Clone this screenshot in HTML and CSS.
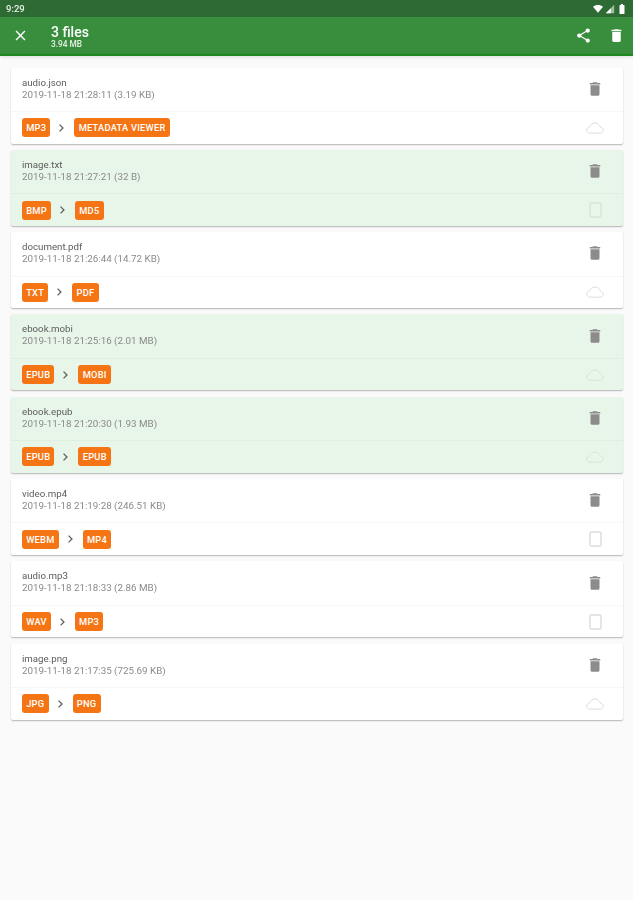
FILE: index.html
```html
<!DOCTYPE html>
<html lang="en">
<head>
<meta charset="utf-8">
<title>Files</title>
<link rel="stylesheet" href="styles.css">
</head>
<body>
<svg class="defs" width="0" height="0" aria-hidden="true">
  <symbol id="i-trash" viewBox="0 0 24 24"><path d="M6 19c0 1.100.9 2 2 2h8c1.100 0 2-.9 2-2V7H6v12zM19 4h-3.500l-1-1h-5l-1 1H5v2h14V4z"/></symbol>
  <symbol id="i-cloud" viewBox="0 0 18 12"><path d="M4.200 11.200C2.200 11.200.7 9.800.7 8c0-1.700 1.300-3 3-3.200C4.600 2.500 6.600 1 9 1c2.700 0 4.800 1.800 5.200 4.100 1.800.2 3.100 1.500 3.100 3 0 1.800-1.500 3.100-3.300 3.100z"/></symbol>
  <symbol id="i-tablet" viewBox="0 0 13 16"><rect x="1" y="1" width="11" height="14" rx="1.500"/></symbol>
  <symbol id="i-chevron" viewBox="0 0 24 24"><path d="M8.600 5.400 7 7l5 5-5 5 1.600 1.600L15.200 12z"/></symbol>
</svg>

<header class="appbar">
  <div class="status">
    <span class="clock">9:29</span>
    <div class="status-icons">
      <svg class="st-wifi" viewBox="0 0 24 24"><path d="M12 21 0 6.500C3.200 3.900 7.400 2.500 12 2.500s8.800 1.400 12 4z"/></svg>
      <svg class="st-signal" viewBox="0 0 24 24"><path d="M2 22 22 2v20z" opacity=".55"/><path d="M2 22 14 10v12z"/></svg>
      <svg class="st-batt" viewBox="0 0 24 24"><path d="M16 4h-2V2h-4v2H8c-.6 0-1 .4-1 1v16c0 .6.400 1 1 1h8c.6 0 1-.4 1-1V5c0-.6-.4-1-1-1z"/></svg>
    </div>
  </div>
  <div class="toolbar">
    <svg class="tb-close" viewBox="0 0 24 24"><path d="M19 6.410 17.590 5 12 10.590 6.410 5 5 6.410 10.590 12 5 17.590 6.410 19 12 13.410 17.590 19 19 17.590 13.410 12z"/></svg>
    <div class="tb-title">
      <div class="tb-main">3 files</div>
      <div class="tb-sub">3.94 MB</div>
    </div>
    <div class="tb-actions">
      <svg class="tb-icon" viewBox="0 0 24 24"><path d="M18 16.080c-.76 0-1.440.3-1.960.77L8.910 12.700c.05-.23.090-.46.090-.7s-.04-.47-.09-.7l7.050-4.110c.54.5 1.250.81 2.040.81 1.660 0 3-1.340 3-3s-1.340-3-3-3-3 1.340-3 3c0 .24.040.47.090.7L8.040 9.810C7.500 9.310 6.790 9 6 9c-1.660 0-3 1.340-3 3s1.340 3 3 3c.79 0 1.500-.31 2.040-.81l7.120 4.160c-.05.21-.08.43-.08.65 0 1.610 1.310 2.920 2.920 2.920s2.920-1.310 2.920-2.920-1.310-2.920-2.920-2.920z"/></svg>
      <svg class="tb-icon"><use href="#i-trash"/></svg>
    </div>
  </div>
</header>

<main class="list">
  <article class="card">
    <div class="card-top"><div class="meta"><div class="name">audio.json</div><div class="date">2019-11-18 21:28:11 (3.19 KB)</div></div><svg class="trash"><use href="#i-trash"/></svg></div>
    <div class="card-bottom"><span class="chip">MP3</span><svg class="chev"><use href="#i-chevron"/></svg><span class="chip">METADATA VIEWER</span><svg class="dest cloud"><use href="#i-cloud"/></svg></div>
  </article>
  <article class="card sel">
    <div class="card-top"><div class="meta"><div class="name">image.txt</div><div class="date">2019-11-18 21:27:21 (32 B)</div></div><svg class="trash"><use href="#i-trash"/></svg></div>
    <div class="card-bottom"><span class="chip">BMP</span><svg class="chev"><use href="#i-chevron"/></svg><span class="chip">MD5</span><svg class="dest tablet"><use href="#i-tablet"/></svg></div>
  </article>
  <article class="card">
    <div class="card-top"><div class="meta"><div class="name">document.pdf</div><div class="date">2019-11-18 21:26:44 (14.72 KB)</div></div><svg class="trash"><use href="#i-trash"/></svg></div>
    <div class="card-bottom"><span class="chip">TXT</span><svg class="chev"><use href="#i-chevron"/></svg><span class="chip">PDF</span><svg class="dest cloud"><use href="#i-cloud"/></svg></div>
  </article>
  <article class="card sel">
    <div class="card-top"><div class="meta"><div class="name">ebook.mobi</div><div class="date">2019-11-18 21:25:16 (2.01 MB)</div></div><svg class="trash"><use href="#i-trash"/></svg></div>
    <div class="card-bottom"><span class="chip">EPUB</span><svg class="chev"><use href="#i-chevron"/></svg><span class="chip">MOBI</span><svg class="dest cloud"><use href="#i-cloud"/></svg></div>
  </article>
  <article class="card sel">
    <div class="card-top"><div class="meta"><div class="name">ebook.epub</div><div class="date">2019-11-18 21:20:30 (1.93 MB)</div></div><svg class="trash"><use href="#i-trash"/></svg></div>
    <div class="card-bottom"><span class="chip">EPUB</span><svg class="chev"><use href="#i-chevron"/></svg><span class="chip">EPUB</span><svg class="dest cloud"><use href="#i-cloud"/></svg></div>
  </article>
  <article class="card">
    <div class="card-top"><div class="meta"><div class="name">video.mp4</div><div class="date">2019-11-18 21:19:28 (246.51 KB)</div></div><svg class="trash"><use href="#i-trash"/></svg></div>
    <div class="card-bottom"><span class="chip">WEBM</span><svg class="chev"><use href="#i-chevron"/></svg><span class="chip">MP4</span><svg class="dest tablet"><use href="#i-tablet"/></svg></div>
  </article>
  <article class="card">
    <div class="card-top"><div class="meta"><div class="name">audio.mp3</div><div class="date">2019-11-18 21:18:33 (2.86 MB)</div></div><svg class="trash"><use href="#i-trash"/></svg></div>
    <div class="card-bottom"><span class="chip">WAV</span><svg class="chev"><use href="#i-chevron"/></svg><span class="chip">MP3</span><svg class="dest tablet"><use href="#i-tablet"/></svg></div>
  </article>
  <article class="card">
    <div class="card-top"><div class="meta"><div class="name">image.png</div><div class="date">2019-11-18 21:17:35 (725.69 KB)</div></div><svg class="trash"><use href="#i-trash"/></svg></div>
    <div class="card-bottom"><span class="chip">JPG</span><svg class="chev"><use href="#i-chevron"/></svg><span class="chip">PNG</span><svg class="dest cloud"><use href="#i-cloud"/></svg></div>
  </article>
</main>
</body>
</html>
```
FILE: styles.css
```css
* { box-sizing: border-box; }
html, body { margin: 0; height: 100%; }
body { background: #fafafa; font-family: Roboto, "Liberation Sans", sans-serif; overflow: hidden; }
.defs { position: absolute; }

.appbar { color: #fff; box-shadow: 0 1px 3px rgba(0,0,0,.12); filter: blur(.5px); }
.status { height: 17px; background: #2e6b34; display: flex; align-items: center; justify-content: space-between; padding: 0 5px 0 6px; }
.clock { font-size: 9.500px; font-weight: 500; color: #e8f0e8; }
.status-icons { display: flex; align-items: center; gap: 1px; }
.status-icons svg { fill: #fff; display: block; }
.st-wifi { width: 12px; height: 10px; }
.st-signal { width: 10px; height: 10px; }
.st-batt { width: 12px; height: 12px; }

.toolbar { height: 39px; background: #388e3c; border-bottom: 2px solid #1f8a22; display: flex; align-items: center; padding: 0 8px 0 12px; }
.tb-close { width: 17px; height: 17px; fill: #fff; }
.tb-title { margin-left: 22px; flex: 1; padding-top: 2px; }
.tb-main { font-size: 14px; line-height: 15px; font-weight: 500; }
.tb-sub { font-size: 8.300px; line-height: 9px; font-weight: 500; color: #e6f0e6; }
.tb-actions { display: flex; gap: 16px; align-items: center; }
.tb-icon { width: 17px; height: 17px; fill: #fff; display: block; }

.list { display: flex; flex-direction: column; gap: 6.300px; padding: 11.500px 10px 0 11px; filter: blur(.5px); }
.card { height: 76px; background: #fff; border-radius: 2px; box-shadow: 0 1px 1.500px rgba(0,0,0,.28); display: flex; flex-direction: column; }
.card.sel { background: #e8f5e9; }
.card-top { height: 44.500px; display: flex; align-items: center; justify-content: space-between; padding: 0 19.500px 1px 11px; border-bottom: 1px solid rgba(0,0,0,.03); }
.name { font-size: 9.700px; line-height: 12px; color: #5c5c5c; }
.date { font-size: 9.800px; line-height: 12.500px; color: #8a8a8a; }
.trash { width: 18px; height: 18px; fill: #8c8c8c; display: block; }

.card-bottom { flex: 1; display: flex; align-items: center; padding: 0 19.500px 0 11px; }
.chip { height: 19px; padding: 0 4.200px; display: flex; align-items: center; background: #f57413; color: #fff; border-radius: 3px; font-size: 9.300px; font-weight: 500; letter-spacing: .24px; }
.chev { width: 14px; height: 14px; fill: #5f5f5f; margin: 0 5px; }
.dest { margin-left: auto; fill: none; stroke: #dcdcdc; }
.sel .dest { stroke: #d6e5d8; }
.cloud { width: 18px; height: 12px; stroke-width: 1; }
.tablet { width: 13px; height: 16px; margin-right: 1.500px; stroke-width: 1.400; }
```
